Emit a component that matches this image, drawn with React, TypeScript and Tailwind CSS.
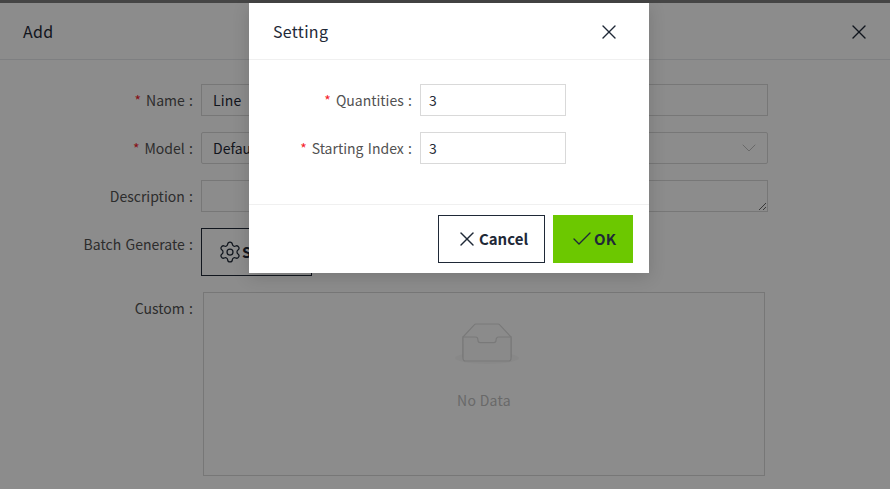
import { Settings, X, Check, ChevronDown } from "lucide-react";

function Label({ text, required, width }: { text: string; required?: boolean; width: string }) {
  return (
    <div className={`${width} shrink-0 text-right text-[14px] leading-[32px] text-[#525252] whitespace-nowrap [word-spacing:1.2px]`}>
      {required && <span className="text-[#f5222d] mr-[5px]">*</span>}
      {text} :
    </div>
  );
}

export default function App() {
  return (
    <div className="relative w-[890px] h-[489px] overflow-hidden bg-white font-['Noto_Sans_CJK_SC','Noto_Sans',sans-serif] text-[#1f2937]">
      <div className="h-[3px] bg-[#7f7f7f]" />
      <div className="flex items-center justify-between h-[57px] pl-[23px] pr-[19px] border-b border-[#e5e7eb]">
        <span className="text-[16px] tracking-[0.3px]">Add</span>
        <X className="w-6 h-6 mt-[2px]" strokeWidth={1.4} />
      </div>
      <div className="pt-6 flex flex-col gap-4">
        <div className="flex gap-2">
          <Label text="Name" required width="w-[193px]" />
          <div className="w-[567px] h-8 border border-[#d9d9d9] pl-[11px] pr-3 text-[14px] leading-[30px] tracking-[0.2px]">Line</div>
        </div>
        <div className="flex gap-2">
          <Label text="Model" required width="w-[193px]" />
          <div className="w-[567px] h-8 border border-[#d9d9d9] rounded-[2px] pl-[11px] pr-[6px] text-[14px] leading-[30px] flex items-center justify-between">
            <span>Default</span>
            <ChevronDown className="w-6 h-6 text-[#bfbfbf]" strokeWidth={1} />
          </div>
        </div>
        <div className="flex gap-2">
          <Label text="Description" width="w-[193px]" />
          <textarea readOnly className="block w-[567px] h-8 border border-[#d9d9d9] outline-none" />
        </div>
        <div className="flex gap-2">
          <Label text="Batch Generate" width="w-[193px]" />
          <div className="w-[111px] h-12 border border-[#1f2937] flex items-center pl-4 text-[15px] font-bold">
            <Settings className="w-6 h-6" strokeWidth={1.25} />
            <span>Setting</span>
          </div>
        </div>
        <div className="flex gap-[10px]">
          <Label text="Custom" width="w-[193px]" />
          <div className="w-[562px] h-[184px] border border-[#d9d9d9] flex flex-col items-center pt-[30px]">
            <svg width="64" height="43" viewBox="0 0 64 43" className="ml-[6px]">
              <ellipse cx="32" cy="35" rx="32" ry="6" fill="#f8f8f8" />
              <g fill="none" stroke="#dddddd" strokeWidth="1.2">
                <path d="M56 14 45 2.2C44.4 1.5 43.8 1 43 1H21c-.8 0-1.4.5-2 1.2L8 14v20h48V14Z" fill="#fdfdfd" />
                <path d="M8 14h12.5c1.4 0 2.4 1.2 2.4 2.8 0 1.6 1 2.9 2.4 2.9h13.4c1.4 0 2.4-1.3 2.4-2.9 0-1.6 1-2.8 2.4-2.8H56v21.5c0 1.5-1 2.5-2.4 2.5H10.4C9 38 8 37 8 35.5V14Z" fill="#fbfbfb" />
              </g>
            </svg>
            <div className="mt-[23px] text-[14px] leading-[22px] text-[#bfbfbf] tracking-[0.3px]">No Data</div>
          </div>
        </div>
      </div>

      <div className="absolute inset-0 bg-[rgba(0,0,0,0.45)]" />

      <div className="absolute left-[249px] top-[3px] w-[400px] bg-white shadow-[0_4px_16px_rgba(0,0,0,0.15)]">
        <div className="flex items-center justify-between h-[57px] pl-6 pr-[28px] border-b border-[#f0f0f0]">
          <span className="text-[16px] tracking-[0.3px]">Setting</span>
          <X className="w-6 h-6 mt-[2px]" strokeWidth={1.4} />
        </div>
        <div className="pt-6 pb-6 flex flex-col gap-4 h-[145px] border-b border-[#f0f0f0]">
          <div className="flex gap-2">
            <Label text="Quantities" required width="w-[163px]" />
            <div className="w-[146px] h-8 border border-[#d9d9d9] pl-2 text-[14px] leading-[30px]">3</div>
          </div>
          <div className="flex gap-2">
            <Label text="Starting Index" required width="w-[163px]" />
            <div className="w-[146px] h-8 border border-[#d9d9d9] pl-2 text-[14px] leading-[30px]">3</div>
          </div>
        </div>
        <div className="flex justify-end gap-2 h-[68px] pt-[10px] pr-4">
          <div className="w-[107px] h-12 border border-[#1f2937] flex items-center justify-center text-[15px] font-bold">
            <X className="w-6 h-6" strokeWidth={1.4} />
            <span>Cancel</span>
          </div>
          <div className="w-20 h-12 bg-[#6cc800] flex items-center justify-center text-[15px] font-bold">
            <Check className="w-6 h-6" strokeWidth={1.4} />
            <span>OK</span>
          </div>
        </div>
      </div>
    </div>
  );
}
